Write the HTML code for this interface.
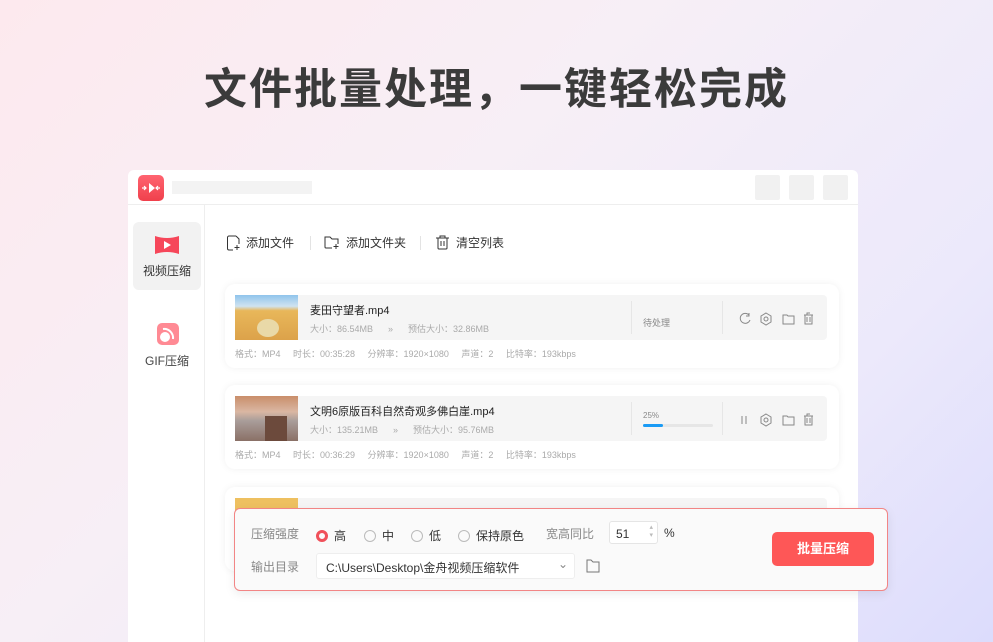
<!DOCTYPE html>
<html><head><meta charset="utf-8"><style>
*{margin:0;padding:0;box-sizing:border-box}
body{width:993px;height:642px;overflow:hidden;position:relative;font-family:"Liberation Sans","Noto Sans CJK SC",sans-serif;
background:linear-gradient(135deg,#fde9ee 0%,#f7eff6 40%,#ece9fb 75%,#dcdcfc 100%)}
.title{position:absolute;top:62px;left:0;width:993px;text-align:center;font-size:43px;line-height:56px;font-weight:bold;color:#3b3b3b;letter-spacing:2px}
.win{position:absolute;left:128px;top:170px;width:730px;height:472px;background:#fff;border-radius:6px 6px 0 0;overflow:hidden}
.tb{height:35px;border-bottom:1px solid #eee;position:relative}
.logo{position:absolute;left:10px;top:5px;width:26px;height:26px;border-radius:5px;background:linear-gradient(#ff6470,#f0404c)}
.tbar{position:absolute;left:44px;top:11px;width:140px;height:13px;background:#f3f3f3}
.wb{position:absolute;top:5px;width:25px;height:25px;background:#f1f1f1;border-radius:2px}
.side{position:absolute;left:0;top:35px;width:77px;bottom:0;border-right:1px solid #eee}
.sitem{position:absolute;left:5px;width:68px;height:68px;border-radius:6px;text-align:center;font-size:12px;color:#333}
.tool{position:absolute;top:64px;font-size:12px;color:#333;display:flex;align-items:center;gap:6px}
.sep{position:absolute;top:66px;width:1px;height:14px;background:#e3e3e3}
.card{position:absolute;left:97px;width:614px;height:84px;background:#fff;border-radius:10px;box-shadow:0 0 8px rgba(0,0,0,.06)}
.row{position:absolute;left:10px;top:11px;width:592px;height:45px;background:#f5f5f5;border-radius:4px}
.thumb{position:absolute;left:0;top:0;width:63px;height:45px}
.name{position:absolute;left:75px;top:7px;font-size:11px;color:#222}
.size{position:absolute;left:75px;top:27px;font-size:9px;color:#aaa;white-space:pre}
.vs{position:absolute;left:396px;top:6px;width:1px;height:33px;background:#e6e6e6}
.vs2{left:487px}
.meta{position:absolute;left:10px;top:63px;font-size:9px;color:#aaa;white-space:pre}
.panel{position:absolute;left:234px;top:508px;width:654px;height:83px;background:#fafafa;border:1px solid #f28585;border-radius:6px;box-shadow:0 3px 10px rgba(0,0,0,.08);font-size:12px}
.lbl{position:absolute;color:#888}
.rad{position:absolute;top:18px;display:flex;align-items:center;gap:6px;color:#333}
.rad i{display:inline-block;width:12px;height:12px;border:1px solid #bbb;border-radius:50%}
.rad i.on{border:3px solid #f0505a}
.btn{position:absolute;left:537px;top:23px;width:102px;height:34px;background:#fe5757;border-radius:5px;color:#fff;font-weight:bold;font-size:13px;text-align:center;line-height:34px}
</style></head><body>
<div class="title">文件批量处理，一键轻松完成</div>
<div class="win">
 <div class="tb"><div class="logo"><svg width="26" height="26"><path d="M11 8l6 5-6 5z" fill="#fff"/><path d="M4 13h4M6 11l2 2-2 2M22 13h-4M20 11l-2 2 2 2" stroke="#fff" stroke-width="1.2" fill="none"/></svg></div><div class="tbar"></div>
 <div class="wb" style="left:627px"></div><div class="wb" style="left:661px"></div><div class="wb" style="left:695px"></div></div>
 <div class="side">
  <div class="sitem" style="top:17px;background:#f2f2f2"><svg width="28" height="24" style="margin-top:11px"><path d="M2 3q12 4 24 0v18q-12-4-24 0z" fill="#f6475a"/><path d="M11 8l7 4-7 4z" fill="#fff"/></svg><div style="margin-top:2px">视频压缩</div></div>
  <div class="sitem" style="top:112px"><svg width="26" height="26" style="margin-top:3px"><rect x="3" y="3" width="22" height="22" rx="5" fill="#ff8a94"/><circle cx="11" cy="17" r="5" fill="#fff"/><path d="M9 9a9 9 0 0 1 10 10" stroke="#fff" stroke-width="2" fill="none"/></svg><div style="margin-top:3px;color:#444">GIF压缩</div></div>
 </div>
 <div class="tool" style="left:98px"><svg width="14" height="16"><path d="M10 1H3a1.5 1.5 0 0 0-1.5 1.5v11A1.5 1.5 0 0 0 3 15h4M10 1l3 3v5" stroke="#333" fill="none"/><path d="M11 10v5M8.5 12.5h5" stroke="#333"/></svg>添加文件</div>
 <div class="sep" style="left:182px"></div>
 <div class="tool" style="left:196px"><svg width="16" height="15"><path d="M8 13H2a1 1 0 0 1-1-1V2h5l2 2h6v5" stroke="#333" fill="none"/><path d="M12 9v5M9.5 11.5h5" stroke="#333"/></svg>添加文件夹</div>
 <div class="sep" style="left:292px"></div>
 <div class="tool" style="left:307px"><svg width="15" height="15"><path d="M1 3h13M5 3V1h5v2M3 3v10a1 1 0 0 0 1 1h7a1 1 0 0 0 1-1V3M6 6v5M9 6v5" stroke="#333" fill="none"/></svg>清空列表</div>

 <div class="card" style="top:114px"><div class="row">
  <div class="thumb" style="background:linear-gradient(#8fc4ec 0,#cfe3f0 25%,#e8b75a 35%,#dca24a 100%)"><div style="position:absolute;left:22px;top:24px;width:22px;height:18px;border-radius:50%;background:#e9d9a8"></div></div>
  <div class="name">麦田守望者.mp4</div><div class="size">大小：86.54MB      »      预估大小：32.86MB</div>
  <div class="vs"></div><div style="position:absolute;left:408px;top:21px;font-size:9px;color:#888">待处理</div><div class="vs vs2"></div>
 </div><div class="meta">格式：MP4     时长：00:35:28     分辨率：1920×1080     声道：2     比特率：193kbps</div></div>

 <div class="card" style="top:215px"><div class="row">
  <div class="thumb" style="background:linear-gradient(#c98e6a 0,#dab7a3 35%,#a99d9a 55%,#8a7066 100%)"><div style="position:absolute;left:30px;top:20px;width:22px;height:25px;background:#6c4a3c"></div></div>
  <div class="name">文明6原版百科自然奇观多佛白崖.mp4</div><div class="size">大小：135.21MB      »      预估大小：95.76MB</div>
  <div class="vs"></div><div style="position:absolute;left:408px;top:15px;font-size:8px;color:#888">25%</div>
  <div style="position:absolute;left:408px;top:28px;width:70px;height:3px;background:#e6e6e6;border-radius:2px"><div style="width:20px;height:3px;background:#1a9bf5;border-radius:2px"></div></div>
  <div class="vs vs2"></div>
 </div><div class="meta">格式：MP4     时长：00:36:29     分辨率：1920×1080     声道：2     比特率：193kbps</div></div>

 <div class="card" style="top:317px"><div class="row"><div class="thumb" style="background:#eec060"></div></div></div>
</div>
<svg style="position:absolute;left:738px;top:312px" width="80" height="14" fill="none" stroke="#888" stroke-width="1">
 <path d="M11 3A5 5 0 1 0 12 8M11 1v3H8"/><circle cx="28" cy="7" r="2"/><path d="M28 1l5 3v6l-5 3-5-3V4z"/><path d="M45 3h4l1 1h6v8h-11z"/><path d="M66 3h9M69 3V1h3M67 3v9h7V3M69 5v5M72 5v5"/></svg>
<svg style="position:absolute;left:738px;top:413px" width="80" height="14" fill="none" stroke="#888" stroke-width="1">
 <path d="M4 3v8M8 3v8"/><circle cx="28" cy="7" r="2"/><path d="M28 1l5 3v6l-5 3-5-3V4z"/><path d="M45 3h4l1 1h6v8h-11z"/><path d="M66 3h9M69 3V1h3M67 3v9h7V3M69 5v5M72 5v5"/></svg>
<div class="panel">
 <div class="lbl" style="left:16px;top:16px">压缩强度</div>
 <div class="rad" style="left:81px"><i class="on"></i>高</div>
 <div class="rad" style="left:129px"><i></i>中</div>
 <div class="rad" style="left:176px"><i></i>低</div>
 <div class="rad" style="left:223px"><i></i>保持原色</div>
 <div class="lbl" style="left:311px;top:16px">宽高同比</div>
 <div style="position:absolute;left:374px;top:12px;width:49px;height:23px;background:#fff;border:1px solid #e5e5e5;border-radius:3px;padding:5px 6px;color:#333">51<span style="position:absolute;right:4px;top:2px;font-size:7px;color:#bbb;line-height:8px">▴<br>▾</span></div>
 <div style="position:absolute;left:429px;top:17px;color:#333">%</div>
 <div class="lbl" style="left:16px;top:49px">输出目录</div>
 <div style="position:absolute;left:81px;top:44px;width:259px;height:26px;background:#fff;border:1px solid #eee;border-radius:3px;padding:5px 9px;color:#333">C:\Users\Desktop\金舟视频压缩软件<span style="position:absolute;right:6px;top:3px;color:#888">⌄</span></div>
 <svg style="position:absolute;left:350px;top:49px" width="16" height="16" fill="none" stroke="#777"><path d="M2 2h4l2 2h6v10H2z"/></svg>
 <div class="btn">批量压缩</div>
</div>
</body></html>
